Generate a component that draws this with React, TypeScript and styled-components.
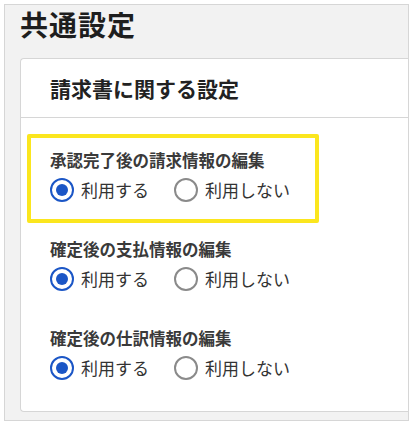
import React, { useState } from 'react';
import styled, { createGlobalStyle } from 'styled-components';

const GlobalStyle = createGlobalStyle`
  html, body {
    margin: 0;
    padding: 0;
    background: #ffffff;
  }

  body {
    font-family: 'Noto Sans CJK JP', 'Noto Sans', sans-serif;
    color: #333333;
  }
`;

interface Setting {
  id: string;
  label: string;
  value: boolean;
  highlighted?: boolean;
}

const SETTINGS: Setting[] = [
  { id: 'approved', label: '承認完了後の請求情報の編集', value: true, highlighted: true },
  { id: 'payment', label: '確定後の支払情報の編集', value: true },
  { id: 'journal', label: '確定後の仕訳情報の編集', value: true }
];

const Page = styled.div`
  margin: 4px;
  width: 405px;
  height: 417px;
  box-sizing: border-box;
  border: 1px solid #d6d6d6;
  background: #f2f2f2;
  padding: 0 0 0 15px;
  overflow: hidden;
`;

const Title = styled.h1`
  margin: 0;
  font-size: 28px;
  line-height: 38px;
  font-weight: 700;
  color: #1e1e1e;
  letter-spacing: 1px;
`;

const Card = styled.section`
  margin-top: 15px;
  height: 354px;
  box-sizing: border-box;
  background: #ffffff;
  border: 1px solid #d6d6d6;
  border-right: none;
  border-radius: 4px 0 0 4px;
`;

const CardHeader = styled.header`
  height: 58px;
  display: flex;
  align-items: center;
  padding-left: 29px;
  border-bottom: 1px solid #d6d6d6;
  font-size: 21px;
  font-weight: 700;
  color: #222222;
`;

const CardBody = styled.div`
  padding: 16px 0 0 6px;
  display: flex;
  flex-direction: column;
`;

const Group = styled.div<{ $highlighted?: boolean }>`
  width: 292px;
  box-sizing: border-box;
  border: 4px solid ${(p) => (p.$highlighted ? '#fbe61e' : 'transparent')};
  border-radius: 2px;
  padding: 10px 0 16px 19px;
`;

const GroupLabel = styled.div`
  font-size: 16.5px;
  line-height: 24px;
  font-weight: 700;
  color: #3a3a3a;
`;

const Options = styled.div`
  display: flex;
  gap: 25px;
  margin-top: 5px;
`;

const Option = styled.label`
  display: flex;
  align-items: center;
  gap: 7px;
  font-size: 17px;
  line-height: 26px;
  color: #333333;
  cursor: pointer;
`;

const Circle = styled.span<{ $checked: boolean }>`
  width: 24px;
  height: 24px;
  box-sizing: border-box;
  border-radius: 50%;
  border: 2.5px solid ${(p) => (p.$checked ? '#1b56c6' : '#8a8a8a')};
  display: flex;
  align-items: center;
  justify-content: center;

  &::after {
    content: '';
    width: 12px;
    height: 12px;
    border-radius: 50%;
    background: ${(p) => (p.$checked ? '#1b56c6' : 'transparent')};
  }
`;

function Radio ({ checked, label, onSelect }: { checked: boolean; label: string; onSelect: () => void }): React.ReactElement {
  return (
    <Option onClick={onSelect}>
      <Circle $checked={checked} />
      {label}
    </Option>
  );
}

export default function App (): React.ReactElement {
  const [values, setValues] = useState<Record<string, boolean>>(
    Object.fromEntries(SETTINGS.map((s) => [s.id, s.value]))
  );

  const set = (id: string, value: boolean): void => {
    setValues((prev) => ({ ...prev, [id]: value }));
  };

  return (
    <>
      <GlobalStyle />
      <Page>
        <Title>共通設定</Title>
        <Card>
          <CardHeader>請求書に関する設定</CardHeader>
          <CardBody>
            {SETTINGS.map((s) => (
              <Group key={s.id} $highlighted={s.highlighted}>
                <GroupLabel>{s.label}</GroupLabel>
                <Options>
                  <Radio checked={values[s.id]} label='利用する' onSelect={() => set(s.id, true)} />
                  <Radio checked={!values[s.id]} label='利用しない' onSelect={() => set(s.id, false)} />
                </Options>
              </Group>
            ))}
          </CardBody>
        </Card>
      </Page>
    </>
  );
}
